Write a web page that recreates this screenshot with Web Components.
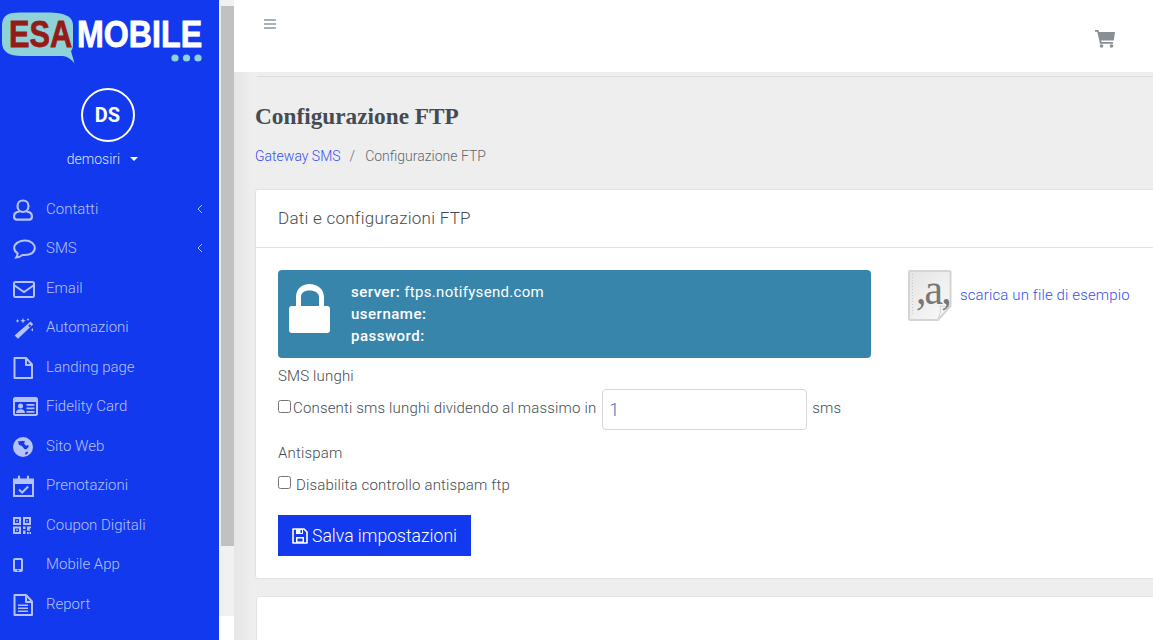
<!DOCTYPE html>
<html lang="it">
<head>
<meta charset="utf-8">
<title>Configurazione FTP</title>
<style>
  html, body { margin: 0; height: 100%; overflow: hidden; background: #fff; }
  body { font-family: Roboto, "Liberation Sans", sans-serif; }
</style>
</head>
<body>

<esa-app>
  <esa-sidebar slot="side" user="demosiri" initials="DS">
    <esa-nav-item icon="user" arrow>Contatti</esa-nav-item>
    <esa-nav-item icon="chat" arrow>SMS</esa-nav-item>
    <esa-nav-item icon="mail">Email</esa-nav-item>
    <esa-nav-item icon="wand">Automazioni</esa-nav-item>
    <esa-nav-item icon="file">Landing page</esa-nav-item>
    <esa-nav-item icon="card">Fidelity Card</esa-nav-item>
    <esa-nav-item icon="globe">Sito Web</esa-nav-item>
    <esa-nav-item icon="calendar">Prenotazioni</esa-nav-item>
    <esa-nav-item icon="qr">Coupon Digitali</esa-nav-item>
    <esa-nav-item icon="phone">Mobile App</esa-nav-item>
    <esa-nav-item icon="report">Report</esa-nav-item>
  </esa-sidebar>
  <esa-scrollbar slot="bar"></esa-scrollbar>

  <esa-topbar></esa-topbar>
  <esa-page-head title="Configurazione FTP" parent="Gateway SMS"></esa-page-head>

  <esa-card heading="Dati e configurazioni FTP">
    <div style="display:flex;align-items:flex-start">
      <ftp-alert server="ftps.notifysend.com"></ftp-alert>
      <sample-link>scarica un file di esempio</sample-link>
    </div>
    <long-sms-field></long-sms-field>
    <antispam-field></antispam-field>
    <save-button>Salva impostazioni</save-button>
  </esa-card>
  <esa-card empty></esa-card>
</esa-app>

<script>
const icons = {
  user: `<path fill="none" stroke="currentColor" stroke-width="2.200" d="M10 1.500c3.200 0 5.500 2.300 5.500 5.500 0 3.400-2.300 6-5.500 6S4.500 10.400 4.500 7c0-3.200 2.300-5.500 5.500-5.500zM6.500 12.300C3.300 12.800 1.100 14.500 1.100 17v.8c0 1.700 1.100 2.800 2.800 2.800h12.200c1.700 0 2.800-1.100 2.800-2.800V17c0-2.500-2.200-4.200-5.400-4.700"/>`,
  chat: `<path fill="none" stroke="currentColor" stroke-width="2" d="M12 2.500C6.300 2.500 1.200 5.500 1.200 10c0 2.300 1.300 4.100 3.400 5.300 0 1.700-.6 3-1.400 4.300 2.500-.3 4.500-1.300 6.200-2.700.8.100 1.700.2 2.600.2 5.700 0 9.800-3 9.800-7.100S17.700 2.500 12 2.500z"/>`,
  mail: `<rect x="1" y="4" width="20" height="15" rx="1.500" fill="none" stroke="currentColor" stroke-width="2"/><path fill="none" stroke="currentColor" stroke-width="2" d="M1.500 7.500 11 14l9.500-6.500"/>`,
  wand: `<path fill="currentColor" d="M17.500 4.500l2.800 2.800L5 21.800 1.600 18.600zM15.300 8.700l1.500 1.500 1.400-1.500-1.500-1.500z"/><path fill="currentColor" d="M10 1l.8 2 2 .8-2 .8-.8 2-.8-2-2-.8 2-.8zM4.500 2l.6 1.300 1.300.6-1.300.6-.6 1.300-.6-1.300-1.300-.6 1.300-.6zM15 1l.5 1 1 .5-1 .5-.5 1-.5-1-1-.5 1-.5zM19.500 11l.6 1.200 1.200.6-1.200.6-.6 1.200-.6-1.200-1.200-.6 1.200-.6z"/>`,
  file: `<path fill="none" stroke="currentColor" stroke-width="2" stroke-linejoin="round" d="M1.500 1h11.500l6 6.500V21H1.500zM13 1v7h6"/>`,
  card: `<path fill="currentColor" fill-rule="evenodd" d="M2 1h21c1 0 2 1 2 2v15c0 1-1 2-2 2H2c-1 0-2-1-2-2V3c0-1 1-2 2-2zm0 5v12h21V6z"/><circle cx="7.500" cy="10" r="2.500" fill="currentColor"/><path fill="currentColor" d="M3 17c0-2.500 1.500-3.800 4.500-3.800s4.500 1.300 4.500 3.800zM13.500 8h8v1.800h-8zM13.500 11.500h8v1.800h-8zM13.500 15h8v1.800h-8z"/>`,
  globe: `<path fill="currentColor" fill-rule="evenodd" d="M10 1a10 10 0 1 1 0 20 10 10 0 0 1 0-20zM5 5c1.500.6 3 .4 4.200-.2l3 .6-1.200 2 2 2.400 2.300-.8.400 1.800-2.500 2.700-1.800-.6-2.500-2.800-3-1.300zM12.500 16.300l2.800-.8-1 2.400-2.300.8z"/>`,
  calendar: `<path fill="none" stroke="currentColor" stroke-width="2" d="M1 4.500h19V21H1z"/><path fill="currentColor" d="M1 4h19v5H1z"/><path fill="none" stroke="currentColor" stroke-width="2.200" stroke-linecap="round" d="M6 1.500v4M15 1.500v4"/><path fill="none" stroke="currentColor" stroke-width="2" d="M6 14.500l3.200 3 6-6"/>`,
  qr: `<path fill="currentColor" fill-rule="evenodd" d="M0 2h8v8H0zm2 2v4h4V4zM10 2h8v8h-8zm2 2v4h4V4zM0 11.500h8v7.500H0zm2 2v3.500h4v-3.500z"/><path fill="currentColor" d="M3.200 5.200h1.600v1.600H3.200zM13.200 5.200h1.600v1.600h-1.600zM3.200 14.400h1.600V16H3.200zM10 11.500h2.500v2.500H10zM14 11.500h4v1.800h-1.200v2.500H14zM10 15.500h2.500V19H10zM14 17h1.800v2H14zM16.500 17H18v2h-1.500z"/>`,
  phone: `<path fill="currentColor" fill-rule="evenodd" d="M2 4h6c1.200 0 2 .8 2 2v10c0 1.200-.8 2-2 2H2c-1.200 0-2-.8-2-2V6c0-1.200.8-2 2-2zm0 2v9h6V6zm3 9.500a.9.900 0 1 0 0 1.800.9.900 0 0 0 0-1.800z"/>`,
  report: `<path fill="none" stroke="currentColor" stroke-width="2" stroke-linejoin="round" d="M1.500 1h11.500l6 6.500V21H1.500zM13 1v7h6"/><path fill="currentColor" d="M5 10.500h10V12H5zM5 13.500h10V15H5zM5 16.500h10V18H5z"/>`
};

const iconWidths = { card: 25, qr: 18, phone: 11, calendar: 21, mail: 22, chat: 24 };

class EsaApp extends HTMLElement {
  constructor() {
    super();
    this.attachShadow({ mode: "open" }).innerHTML = `
      <style>
        :host { display: flex; height: 640px; width: 1153px; overflow: hidden; background: #fff; }
        .content {
          flex: 1 0 0;
          min-width: 0;
          overflow: hidden;
          background: linear-gradient(90deg, #e6e6e6 0, #eee 18px);
        }
      </style>
      <slot name="side"></slot>
      <slot name="bar"></slot>
      <div class="content"><slot></slot></div>
    `;
  }
}

class EsaSidebar extends HTMLElement {
  constructor() {
    super();
    const user = this.getAttribute("user");
    const initials = this.getAttribute("initials");
    this.attachShadow({ mode: "open" }).innerHTML = `
      <style>
        :host {
          display: block;
          flex: 0 0 219px;
          height: 640px;
          background: #1239ed;
          overflow: hidden;
          color: #fff;
        }
        svg.logo { display: block; width: 219px; height: 68px; }
        .profile { display: flex; flex-direction: column; align-items: center; margin-top: 20px; padding-right: 4px; }
        .avatar {
          width: 50px;
          height: 50px;
          border: 2px solid #fff;
          border-radius: 50%;
          display: flex;
          align-items: center;
          justify-content: center;
          font: 700 20px Roboto, sans-serif;
        }
        .name {
          display: flex;
          align-items: center;
          margin: 9px 10px 0 0;
          font: 300 14px/16px Roboto, sans-serif;
          color: #dfe4fd;
        }
        .name i {
          width: 0;
          height: 0;
          margin-left: 10px;
          border: 4px solid transparent;
          border-top-color: #fff;
          border-bottom: 0;
        }
        nav { margin-top: 22px; display: block; }
      </style>
      <svg class="logo" viewBox="0 0 219 68">
        <path fill="#8fd3d9" d="M2 26C2 15 8 12.500 20 12.500h26c15 0 27 2 27 13v19c0 3-.5 5-2 6.500l3.500 12.500c-3-4-7-7-12-7.500H22C9 56 2 52 2 42z"/>
        <text transform="translate(9 47) scale(.83 1)" font-family="Liberation Sans, sans-serif" font-weight="700" font-size="37" fill="#941b16" stroke="#941b16" stroke-width=".8">ESA</text>
        <text transform="translate(77 47) scale(.87 1)" font-family="Liberation Sans, sans-serif" font-weight="700" font-size="37" fill="#fff" stroke="#fff" stroke-width=".8">MOBILE</text>
        <circle cx="175" cy="58" r="3.600" fill="#8fd3d9"/>
        <circle cx="186.500" cy="58" r="3.600" fill="#8fd3d9"/>
        <circle cx="198" cy="58" r="3.600" fill="#8fd3d9"/>
      </svg>
      <div class="profile">
        <div class="avatar">${initials}</div>
        <div class="name">${user}<i></i></div>
      </div>
      <nav><slot></slot></nav>
    `;
  }
}

class EsaNavItem extends HTMLElement {
  constructor() {
    super();
    const name = this.getAttribute("icon");
    const w = iconWidths[name] || 20;
    const arrow = this.hasAttribute("arrow")
      ? `<svg class="arrow" width="6" height="10" viewBox="0 0 6 10"><path d="M5 1 1 5l4 4" fill="none" stroke="currentColor" stroke-width="1"/></svg>`
      : "";
    this.attachShadow({ mode: "open" }).innerHTML = `
      <style>
        :host {
          display: flex;
          align-items: center;
          height: 39.5px;
          padding-left: 13px;
          padding-right: 16px;
          font: 300 15px Roboto, sans-serif;
          color: #b6c2fa;
          box-sizing: border-box;
        }
        .ico { width: 33px; flex: none; display: flex; margin-top: 2px; }
        .label { flex: 1; }
      </style>
      <span class="ico"><svg width="${w}" height="22" viewBox="0 0 ${w} 22">${icons[name]}</svg></span>
      <span class="label"><slot></slot></span>
      ${arrow}
    `;
  }
}

class EsaScrollbar extends HTMLElement {
  constructor() {
    super();
    this.attachShadow({ mode: "open" }).innerHTML = `
      <style>
        :host {
          display: block;
          flex: 0 0 15px;
          height: 616px;
          background: #f1f1f1;
          padding: 6px 0 0 2px;
          box-sizing: border-box;
        }
        .thumb { height: 540px; background: #c1c1c1; }
      </style>
      <div class="thumb"></div>
    `;
  }
}

class EsaTopbar extends HTMLElement {
  constructor() {
    super();
    this.attachShadow({ mode: "open" }).innerHTML = `
      <style>
        :host { display: block; }
        .bar {
          height: 72px;
          background: #fff;
          display: flex;
          justify-content: space-between;
          padding: 19px 38px 0 30px;
          box-sizing: border-box;
        }
        .rule { height: 1px; margin: 4px 0 0 23px; background: #dcdcdc; }
        .cart { margin-top: 11px; color: #8a8f93; }
      </style>
      <div class="bar">
        <svg width="12" height="10" viewBox="0 0 12 10"><path fill="#a5b2ba" d="M0 0h12v2H0zM0 4h12v2H0zM0 8h12v2H0z"/></svg>
        <svg class="cart" width="20" height="18" viewBox="0 0 20 18"><path fill="currentColor" d="M0 0h3.400l.7 2H20l-1.300 8.500H6.200l.3 1.500H18v1.800H5L2.300 1.800H0z"/><circle cx="6.500" cy="16" r="1.800" fill="currentColor"/><circle cx="16.500" cy="16" r="1.800" fill="currentColor"/></svg>
      </div>
      <div class="rule"></div>
    `;
  }
}

class EsaPageHead extends HTMLElement {
  constructor() {
    super();
    const title = this.getAttribute("title");
    const parent = this.getAttribute("parent");
    this.attachShadow({ mode: "open" }).innerHTML = `
      <style>
        :host { display: block; padding: 24px 0 0 21px; height: 112px; box-sizing: border-box; }
        h1 {
          margin: 0;
          font: 700 23.300px/30px "Liberation Serif", serif;
          color: #444b52;
        }
        .crumb { margin-top: 15px; font: 300 14px/20px Roboto, sans-serif; color: #5f6870; }
        a { color: #3650ee; text-decoration: none; }
        .sep { margin: 0 10px 0 9px; }
      </style>
      <h1>${title}</h1>
      <div class="crumb"><a>${parent}</a><span class="sep">/</span>${title}</div>
    `;
  }
}

class EsaCard extends HTMLElement {
  constructor() {
    super();
    const heading = this.getAttribute("heading");
    const head = heading ? `<header>${heading}</header>` : "";
    this.attachShadow({ mode: "open" }).innerHTML = `
      <style>
        :host {
          display: block;
          margin: 0 -12px 17px 21px;
          background: #fff;
          border: 1px solid #e2e2e2;
          border-radius: 3px;
          box-sizing: border-box;
        }
        :host([empty]) { margin-left: 22px; height: 60px; }
        header {
          height: 55px;
          padding: 0 22px 2px;
          display: flex;
          align-items: center;
          border-bottom: 1px solid #e2e2e2;
          font: 300 17px Roboto, sans-serif;
          letter-spacing: .26px;
          color: #444b52;
        }
        .body { padding: 22px 22px 22px; }
        :host([empty]) .body { display: none; }
      </style>
      ${head}
      <div class="body"><slot></slot></div>
    `;
  }
}

class FtpAlert extends HTMLElement {
  constructor() {
    super();
    const server = this.getAttribute("server");
    this.attachShadow({ mode: "open" }).innerHTML = `
      <style>
        :host {
          display: flex;
          flex: 0 0 593px;
          height: 88px;
          box-sizing: border-box;
          padding: 11px 0 0 11px;
          background: #3885ab;
          border-radius: 4px;
          color: #fff;
          font: 400 15px/22px Roboto, sans-serif;
          letter-spacing: .3px;
        }
        svg { flex: none; margin: 3px 21px 0 0; }
        b { font-weight: 500; letter-spacing: .5px; }
      </style>
      <svg width="41" height="49" viewBox="0 0 41 49">
        <path fill="#fff" d="M7 22v-9C7 5 13 0 20.500 0S35 5 35 13v9h3c2 0 3 1 3 3v21c0 2-1 3-3 3H3c-2 0-3-1-3-3V25c0-2 1-3 3-3zm5 0h18v-9c0-4-4-6.500-9.500-6.500S12 9 12 13z"/>
      </svg>
      <div>
        <div><b>server:</b> ${server}</div>
        <div><b>username:</b></div>
        <div><b>password:</b></div>
      </div>
    `;
  }
}

class SampleLink extends HTMLElement {
  constructor() {
    super();
    this.attachShadow({ mode: "open" }).innerHTML = `
      <style>
        :host {
          display: flex;
          align-items: center;
          margin-left: 37px;
          font: 300 15px Roboto, sans-serif;
          letter-spacing: .13px;
          color: #3650ee;
        }
        svg { flex: none; margin: -10px 8px 0 0; }
        span { margin-bottom: 3px; }
      </style>
      <svg width="44" height="62" viewBox="0 -10 44 62">
        <defs><linearGradient id="p" x1="0" y1="0" x2="1" y2="1"><stop offset="0" stop-color="#e4e4e4"/><stop offset="1" stop-color="#fafafa"/></linearGradient></defs>
        <path fill="url(#p)" stroke="#d4d4d4" stroke-width="2" d="M2 1h39c1 0 1.500 .5 1.500 1.500V36L30 50H2.500C1.500 50 1 49.500 1 48.500V2c0-.5.5-1 1-1z"/>
        <path fill="none" stroke="#c8c8c8" stroke-dasharray="1 2" d="M4.500 4v42"/>
        <path fill="#f6f6f6" stroke="#d0d0d0" d="M42 36c-3 1-8 0-10 0 1 4 0 9-2 13z"/>
        <text transform="translate(8 34) scale(.95 1)" letter-spacing="-2" font-family="Liberation Serif, serif" font-size="44" fill="#777">,a,</text>
      </svg>
      <span><slot></slot></span>
    `;
  }
}

class LongSmsField extends HTMLElement {
  constructor() {
    super();
    this.attachShadow({ mode: "open" }).innerHTML = `
      <style>
        :host { display: block; font: 300 15px/20px Roboto, sans-serif; letter-spacing: .16px; color: #444b52; }
        .title { margin-top: 8px; }
        .row { display: flex; align-items: center; margin-top: 3px; }
        .row span { margin-bottom: 4px; }
        input[type=checkbox] { margin: 0 2px 7px 0; width: 13px; height: 13px; }
        input[type=text] {
          width: 205px;
          height: 41px;
          box-sizing: border-box;
          margin: 0 5px 0 6px;
          padding: 0 6px;
          border: 1px solid #d3d6da;
          border-radius: 4px;
          font: 300 18px Roboto, sans-serif;
          color: #2f78cc;
          outline: 0;
        }
      </style>
      <div class="title">SMS lunghi</div>
      <div class="row">
        <input type="checkbox"><span>Consenti sms lunghi dividendo al massimo in</span>
        <input type="text" value="1"><span>sms</span>
      </div>
    `;
  }
}

class AntispamField extends HTMLElement {
  constructor() {
    super();
    this.attachShadow({ mode: "open" }).innerHTML = `
      <style>
        :host { display: block; font: 300 15px/20px Roboto, sans-serif; letter-spacing: .16px; color: #444b52; }
        .title { margin-top: 13px; }
        .row { display: flex; align-items: center; margin-top: 12px; }
        input { margin: 0 5px 5px 0; width: 13px; height: 13px; }
      </style>
      <div class="title">Antispam</div>
      <div class="row"><input type="checkbox"><span>Disabilita controllo antispam ftp</span></div>
    `;
  }
}

class SaveButton extends HTMLElement {
  constructor() {
    super();
    this.attachShadow({ mode: "open" }).innerHTML = `
      <style>
        :host {
          display: flex;
          align-items: center;
          width: 193px;
          height: 41px;
          margin-top: 20px;
          padding-left: 14px;
          box-sizing: border-box;
          background: #1239ed;
          color: #fff;
          font: 300 17.600px Roboto, sans-serif;
        }
        svg { flex: none; margin-right: 4px; }
      </style>
      <svg width="16" height="16" viewBox="0 0 16 16">
        <path fill="none" stroke="#fff" stroke-width="1.600" stroke-linejoin="round" d="M1 1h11l3 3v11H1z"/>
        <path fill="#fff" d="M4 1h7v5H4zM4 9h8v6H4z"/><path fill="#1239ed" d="M5.500 10.500h5v3h-5zM8.500 2h1.500v3H8.500z"/>
      </svg>
      <slot></slot>
    `;
  }
}

customElements.define("esa-app", EsaApp);
customElements.define("esa-sidebar", EsaSidebar);
customElements.define("esa-nav-item", EsaNavItem);
customElements.define("esa-scrollbar", EsaScrollbar);
customElements.define("esa-topbar", EsaTopbar);
customElements.define("esa-page-head", EsaPageHead);
customElements.define("esa-card", EsaCard);
customElements.define("ftp-alert", FtpAlert);
customElements.define("sample-link", SampleLink);
customElements.define("long-sms-field", LongSmsField);
customElements.define("antispam-field", AntispamField);
customElements.define("save-button", SaveButton);
</script>
</body>
</html>
